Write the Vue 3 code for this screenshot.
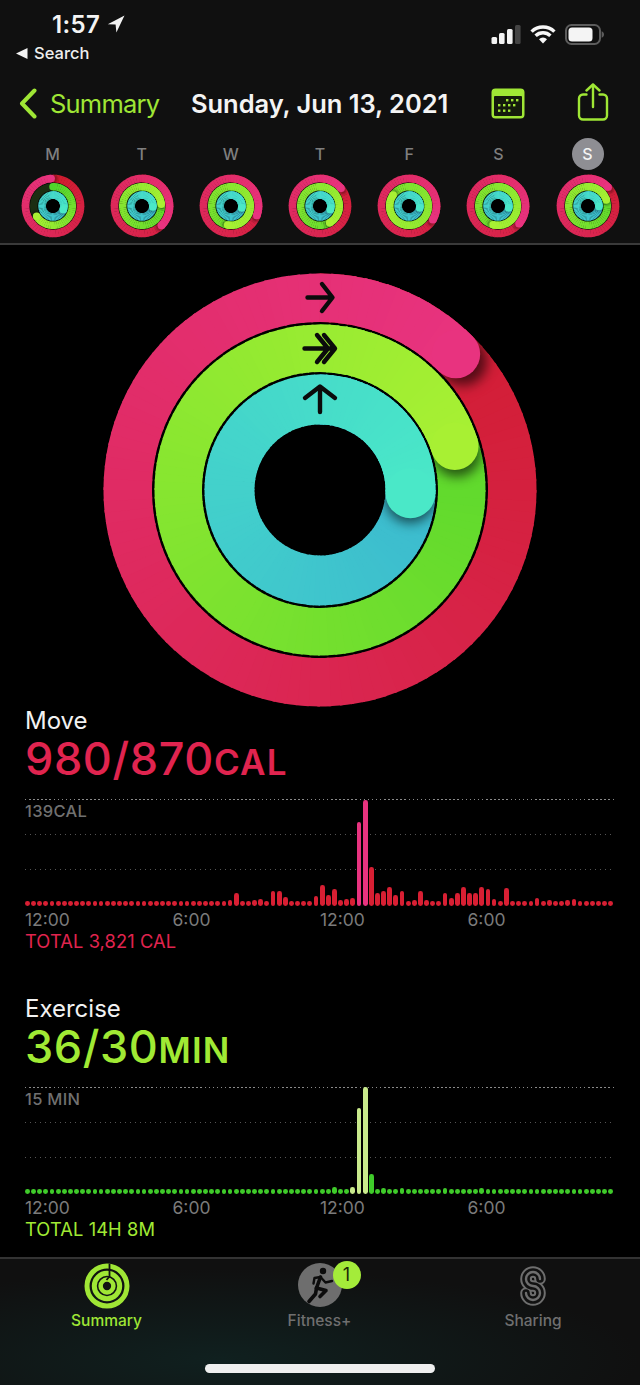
<script setup>
import { h } from 'vue'

const BIG = [
  { mid: 192.25, width: 48.5 },
  { mid: 141.75, width: 47.5 },
  { mid: 90.5, width: 50 },
]
const SMALL = [
  { mid: 27.5, width: 7.7 },
  { mid: 19.3, width: 7.5 },
  { mid: 10.9, width: 7.7 },
]
const PALETTE = [
  { from: [207, 27, 44], to: [232, 51, 127], track: '#2c0a12' },
  { from: [79, 212, 43], to: [168, 240, 51], track: '#1b2e12' },
  { from: [56, 174, 208], to: [74, 232, 200], track: '#0f2a2c' },
]

const polar = (r, deg) => {
  const rad = ((deg - 90) * Math.PI) / 180
  return [r * Math.cos(rad), r * Math.sin(rad)]
}
const arc = (r, a0, a1) => {
  const [x0, y0] = polar(r, a0)
  const [x1, y1] = polar(r, a1)
  return `M${x0.toFixed(2)} ${y0.toFixed(2)}A${r} ${r} 0 0 1 ${x1.toFixed(2)} ${y1.toFixed(2)}`
}
const mix = (a, b, t) =>
  `rgb(${a.map((v, i) => Math.round(v + (b[i] - v) * t)).join(',')})`

const segments = (band, pal, total, a0, a1, step) => {
  const out = []
  for (let a = a0; a < a1; a += step) {
    const e = Math.min(a + step + 0.7, a1)
    out.push(
      h('path', {
        d: arc(band.mid, a, e),
        stroke: mix(pal.from, pal.to, (a + step / 2) / total),
        'stroke-width': band.width,
        fill: 'none',
      }),
    )
  }
  return out
}

const RingSet = (props) => {
  const { bands, totals, id, step, blur } = props
  const large = blur > 2
  const kids = [h('circle', { r: bands[0].mid - bands[0].width / 2 - 0.2, fill: '#000' })]
  bands.forEach((band, i) => {
    const pal = PALETTE[i]
    const total = totals[i]
    const out = band.mid + band.width / 2
    const inn = band.mid - band.width / 2
    const clipId = `${id}-${i}`
    kids.push(
      h('clipPath', { id: clipId }, [
        h('path', {
          'clip-rule': 'evenodd',
          d: `M${-out} 0A${out} ${out} 0 1 1 ${out} 0A${out} ${out} 0 1 1 ${-out} 0ZM${-inn} 0A${inn} ${inn} 0 1 1 ${inn} 0A${inn} ${inn} 0 1 1 ${-inn} 0Z`,
        }),
      ]),
    )
    if (total < 360) {
      kids.push(h('circle', { r: band.mid, fill: 'none', stroke: pal.track, 'stroke-width': band.width }))
    }
    const [sx, sy] = polar(band.mid, 0)
    kids.push(h('circle', { cx: sx, cy: sy, r: band.width / 2, fill: mix(pal.from, pal.to, 0) }))
    const lap = Math.min(total, 360)
    kids.push(...segments(band, pal, total, 0, lap, step))
    const shadowAt = polar(band.mid, total + (large ? 3 : 6))
    kids.push(
      h('g', { 'clip-path': `url(#${clipId})` }, [
        h('circle', {
          cx: shadowAt[0],
          cy: shadowAt[1],
          r: band.width / 2,
          fill: large ? 'rgba(0,0,0,.6)' : 'rgba(0,0,0,.3)',
          style: { filter: `blur(${blur}px)` },
        }),
      ]),
    )
    if (total > 360) kids.push(...segments(band, pal, total, 360, total, step))
    const [hx, hy] = polar(band.mid, total)
    kids.push(h('circle', { cx: hx, cy: hy, r: band.width / 2, fill: mix(pal.from, pal.to, 1) }))
  })
  return h('g', kids)
}
RingSet.props = ['bands', 'totals', 'id', 'step', 'blur']

const days = [
  { letter: 'M', totals: [356, 238, 470] },
  { letter: 'T', totals: [495, 445, 455] },
  { letter: 'W', totals: [470, 550, 460] },
  { letter: 'T', totals: [410, 510, 470] },
  { letter: 'F', totals: [480, 665, 460] },
  { letter: 'S', totals: [490, 555, 460] },
  { letter: 'S', totals: [407, 432, 452], active: true },
]

const makeBars = (over) =>
  Array.from({ length: 96 }, (_, i) => ({ h: over[i]?.[0] ?? 4.8, tone: over[i]?.[1] ?? 'base' }))

const moveRaw = {
  33: 6, 34: 13, 37: 6, 38: 7, 39: 5, 40: 15, 41: 15, 42: 9, 46: 5, 47: 10, 48: 21, 49: 11, 50: 17,
  51: 6, 52: 7, 53: 8, 56: 39, 57: 13, 58: 15, 59: 19, 60: 11, 61: 15, 62: 5, 63: 6, 64: 15, 65: 6,
  68: 13, 69: 8, 70: 13, 71: 19, 72: 13, 73: 13, 74: 19, 75: 17, 76: 7, 77: 5, 78: 18, 83: 8, 85: 6,
  88: 6, 89: 7,
}
const moveOver = { 54: [84, 'hi'], 55: [106.5, 'hi'] }
Object.entries(moveRaw).forEach(([k, v]) => (moveOver[k] = [v, 'base']))

const exerciseOver = {
  50: [7, 'base'], 53: [7, 'hi'], 54: [86, 'hi'], 55: [106.5, 'hi'], 56: [20, 'base'],
  58: [6, 'base'], 61: [6, 'base'], 68: [6, 'base'], 74: [6, 'base'],
}

const charts = [
  {
    key: 'move', title: 'Move', value: '980/870', unit: 'CAL', max: '139CAL',
    total: 'TOTAL 3,821 CAL', bars: makeBars(moveOver),
  },
  {
    key: 'exercise', title: 'Exercise', value: '36/30', unit: 'MIN', max: '15 MIN',
    total: 'TOTAL 14H 8M', bars: makeBars(exerciseOver),
  },
]
const axis = ['12:00', '6:00', '12:00', '6:00']
const sPath = 'M20 13A7 7 0 1 0 13 20A7 7 0 1 1 6 27'
</script>

<template>
  <div class="page">
    <header class="top">
      <div class="status">
        <div class="status-left">
          <div class="clock">
            <span>1:57</span>
            <svg class="loc" width="18" height="18" viewBox="0 0 18 18">
              <path d="M17.5 .5 .8 9.3 8.6 9.6 9.4 17.5Z" fill="#f2f2f2" />
            </svg>
          </div>
          <div class="back-app">
            <svg width="12" height="11" viewBox="0 0 12 11"><path d="M0 5.5 11.5 0V11Z" fill="#f2f2f2" /></svg>
            <span>Search</span>
          </div>
        </div>
        <div class="status-right">
          <svg width="30" height="20" viewBox="0 0 30 20">
            <rect x=".5" y="13" width="5.6" height="7" rx="1.5" fill="#f2f2f2" />
            <rect x="8" y="9" width="5.6" height="11" rx="1.5" fill="#f2f2f2" />
            <rect x="16" y="5" width="5.6" height="15" rx="1.5" fill="#f2f2f2" />
            <rect x="24" y="1" width="5.6" height="19" rx="1.5" fill="#444" />
          </svg>
          <svg width="26" height="20" viewBox="0 0 26 20" fill="none" stroke="#f7f7f7" stroke-width="3.4">
            <path d="M1.6 7.6A16.4 16.4 0 0 1 24.4 7.6" />
            <path d="M5.6 11.7A10.6 10.6 0 0 1 20.4 11.7" />
            <path d="M9 15.2 13 19.4 17 15.2A5.8 5.8 0 0 0 9 15.2Z" fill="#f7f7f7" stroke="none" />
          </svg>
          <svg width="39" height="21" viewBox="0 0 39 21">
            <rect x="1" y="1" width="34" height="19" rx="5.5" fill="none" stroke="#5c5c5c" stroke-width="2" />
            <rect x="3.5" y="3.5" width="24" height="14" rx="3.5" fill="#f4f4f4" />
            <path d="M36.6 7.2C38.2 7.8 39 9 39 10.5S38.2 13.200 36.600 13.800Z" fill="#5c5c5c" />
          </svg>
        </div>
      </div>

      <nav class="nav">
        <div class="nav-back">
          <svg width="19" height="31" viewBox="0 0 19 31" fill="none" stroke="#9fe635" stroke-width="4" stroke-linecap="round" stroke-linejoin="round">
            <path d="M15.500 2.500 3 15.500 15.500 28.500" />
          </svg>
          <span>Summary</span>
        </div>
        <h1 class="nav-title">Sunday, Jun 13, 2021</h1>
        <div class="nav-actions">
          <svg width="34" height="31" viewBox="0 0 34 31">
            <rect x=".5" y=".5" width="33" height="30" rx="4" fill="#9fe635" />
            <rect x="3" y="8" width="28" height="20" rx="1" fill="#141a0c" />
            <g fill="#9fe635">
              <rect v-for="x in [15, 20, 25]" :key="'a' + x" :x="x" y="11" width="2.400" height="2.400" />
              <rect v-for="x in [7, 12, 17, 22]" :key="'b' + x" :x="x" y="16" width="2.400" height="2.400" />
              <rect v-for="x in [7, 12, 17]" :key="'c' + x" :x="x" y="21.500" width="2.400" height="2.400" />
            </g>
          </svg>
          <svg class="share" width="32" height="38" viewBox="0 0 32 38" fill="none" stroke="#9fe635" stroke-width="2.400" stroke-linecap="round" stroke-linejoin="round">
            <path d="M9.500 11.500H6A4 4 0 0 0 2 15.500V32.500A4 4 0 0 0 6 36.500H26A4 4 0 0 0 30 32.500V15.500A4 4 0 0 0 26 11.500H22.500" />
            <path d="M16 24V2" />
            <path d="M9.500 7.500 16 1.500 22.500 7.500" />
          </svg>
        </div>
      </nav>

      <div class="week">
        <div v-for="(d, i) in days" :key="i" class="day">
          <span class="day-letter" :class="{ active: d.active }">{{ d.letter }}</span>
          <svg class="mini" width="64" height="64" viewBox="-32 -32 64 64">
            <RingSet :bands="SMALL" :totals="d.totals" :id="'d' + i" :step="6" :blur="1.2" />
          </svg>
        </div>
      </div>
    </header>

    <section class="hero">
      <svg width="436" height="436" viewBox="-218 -218 436 436">
        <RingSet :bands="BIG" :totals="[405, 432, 452]" id="hero" :step="3" :blur="6" />
        <g fill="none" stroke="#0b0b0b" stroke-width="4.400" stroke-linecap="round" stroke-linejoin="round">
          <path d="M-12.500 -192.500H12M2 -206 12.500 -192.500 2 -179" />
          <path d="M-15.500 -141.500H10M4 -155 15 -141.500 4 -128M-3 -155 8 -141.500 -3 -128" />
          <path d="M0 -78V-102M-15 -92 0 -103.500 15 -92" />
        </g>
      </svg>
    </section>

    <section v-for="c in charts" :key="c.key" class="metric" :class="c.key">
      <div class="metric-title">{{ c.title }}</div>
      <div class="metric-value">{{ c.value }}<small>{{ c.unit }}</small></div>
      <div class="chart">
        <i class="rule strong" />
        <i class="rule r2" />
        <i class="rule r3" />
        <span class="chart-max">{{ c.max }}</span>
        <div class="bars">
          <b v-for="(bar, i) in c.bars" :key="i" :class="bar.tone" :style="{ height: bar.h + 'px' }" />
        </div>
      </div>
      <div class="axis"><span v-for="(a, i) in axis" :key="i">{{ a }}</span></div>
      <div class="total">{{ c.total }}</div>
    </section>

    <footer class="tabs">
      <div class="tab-row">
        <div class="tab on">
          <svg width="46" height="46" viewBox="0 0 46 46" fill="none">
            <circle cx="23" cy="23" r="20" stroke="#9fe635" stroke-width="5" />
            <circle cx="23" cy="23" r="12.700" stroke="#9fe635" stroke-width="5" />
            <circle cx="23" cy="23" r="6.400" stroke="#9fe635" stroke-width="4.500" />
            <path d="M25.500 1V13.500L22.500 17" stroke="#111" stroke-width="1.800" />
          </svg>
          <span>Summary</span>
        </div>
        <div class="tab">
          <div class="fit-icon">
            <svg width="44" height="44" viewBox="0 0 44 44">
              <circle cx="22" cy="22" r="22" fill="#6e6e6e" />
              <circle cx="25" cy="8" r="3.200" fill="#0c0c0c" />
              <g fill="none" stroke="#0c0c0c" stroke-width="3.600" stroke-linecap="round" stroke-linejoin="round">
                <path d="M22.500 14 18.500 25" />
                <path d="M22.500 14 16.500 15 15.500 20.500" stroke-width="2.400" />
                <path d="M22.500 14 27.500 19.500 34 18" stroke-width="2.400" />
                <path d="M18.500 25 17.500 31 11 38.500" />
                <path d="M18.500 25 28 27.500 22 33.500" />
              </g>
            </svg>
            <em class="badge">1</em>
          </div>
          <span>Fitness+</span>
        </div>
        <div class="tab">
          <svg width="26" height="46" viewBox="0 -3 26 46" fill="none" stroke-linecap="round">
            <path :d="sPath" stroke="#6e6e6e" stroke-width="11.600" />
            <path :d="sPath" stroke="#111" stroke-width="7.600" />
            <path :d="sPath" stroke="#6e6e6e" stroke-width="2.400" />
          </svg>
          <span>Sharing</span>
        </div>
      </div>
      <div class="home-bar" />
    </footer>
  </div>
</template>

<style>
html, body { background: #000; }
</style>

<style scoped>
.page {
  width: 640px;
  height: 1385px;
  overflow: hidden;
  background: #000;
  color: #fff;
  font-family: Inter, "Liberation Sans", sans-serif;
  display: flex;
  flex-direction: column;
}
.top {
  height: 245px;
  box-sizing: border-box;
  background: #101010;
  border-bottom: 2px solid #3a3a3a;
  flex: none;
}
.status {
  height: 70px;
  display: flex;
  justify-content: space-between;
}
.status-left { padding: 11px 0 0 16px; }
.clock {
  display: flex;
  align-items: center;
  gap: 7px;
  padding-left: 36px;
  height: 26px;
  font-size: 24px;
  font-weight: 600;
  letter-spacing: 0.4px;
  color: #f4f4f4;
}
.back-app {
  display: flex;
  align-items: center;
  gap: 6px;
  margin-top: 5px;
  font-size: 16.5px;
  font-weight: 500;
  color: #eee;
  height: 22px;
}
.status-right {
  display: flex;
  align-items: flex-start;
  gap: 9px;
  padding: 24px 36px 0 0;
}
.nav {
  height: 68px;
  box-sizing: border-box;
  padding: 0 0 2px 19px;
  display: flex;
  align-items: center;
}
.nav-back {
  display: flex;
  align-items: center;
  gap: 12px;
  width: 172px;
  font-size: 25.5px;
  color: #9fe635;
  letter-spacing: -0.8px;
}
.nav-title {
  margin: 0;
  width: 300px;
  font-size: 25.5px;
  font-weight: 600;
  color: #f4f4f4;
  letter-spacing: -0.05px;
  white-space: nowrap;
}
.nav-actions {
  display: flex;
  align-items: center;
  gap: 52px;
}
.share { margin-top: -3px; }
.week {
  display: grid;
  grid-template-columns: repeat(7, 89.17px);
  padding-left: 8px;
}
.day {
  display: flex;
  flex-direction: column;
  align-items: center;
}
.day-letter {
  width: 32px;
  height: 32px;
  border-radius: 50%;
  display: flex;
  align-items: center;
  justify-content: center;
  font-size: 16px;
  font-weight: 500;
  color: #7f7f7f;
}
.day-letter.active { background: #8e8e93; color: #f4f4f4; }
.mini { margin-top: 4px; }

.hero {
  height: 462px;
  flex: none;
  box-sizing: border-box;
  padding-top: 27px;
  display: flex;
  justify-content: center;
}

.metric {
  flex: none;
  height: 287.5px;
  padding: 0 26px 0 25px;
  box-sizing: border-box;
}
.metric.exercise { height: 262.5px; }
.metric-title {
  height: 28px;
  line-height: 28px;
  font-size: 24px;
  color: #f2f2f2;
}
.metric-value {
  height: 48px;
  line-height: 47px;
  font-size: 45px;
  font-weight: 500;
  white-space: nowrap;
  letter-spacing: 0.6px;
}
.metric-value small {
  font-size: 35px;
  font-weight: 600;
  letter-spacing: 1.2px;
}
.move .metric-value, .move .total { color: #e0244f; }
.exercise .metric-value, .exercise .total { color: #a0ea34; }

.chart {
  position: relative;
  height: 107px;
  margin-top: 16px;
  display: flex;
  align-items: flex-end;
}
.rule {
  position: absolute;
  left: 0;
  right: 0;
  height: 1px;
  background: repeating-linear-gradient(90deg, #555 0 1px, transparent 1px 5px);
}
.rule.strong { top: 0; background: repeating-linear-gradient(90deg, #8a8a8a 0 1.5px, transparent 1.5px 4.08px); }
.rule.r2 { top: 35px; }
.rule.r3 { top: 70px; }
.chart-max {
  position: absolute;
  left: 0;
  top: 2px;
  font-size: 16.5px;
  line-height: 20px;
  font-weight: 500;
  letter-spacing: 0.3px;
  color: #707070;
}
.bars {
  position: relative;
  flex: 1;
  display: flex;
  justify-content: space-between;
  align-items: flex-end;
}
.bars b {
  display: block;
  width: 4.8px;
  border-radius: 2.4px;
  flex: none;
}
.move .bars .base { background: #d81f33; }
.move .bars .hi { background: #e8337f; }
.exercise .bars .base { background: #3fcb2a; }
.exercise .bars .hi { background: #c9ea8c; }

.axis {
  display: grid;
  grid-template-columns: repeat(4, 147.5px);
  height: 24px;
  line-height: 28px;
  font-size: 17.5px;
  color: #7b7b7b;
}
.total {
  height: 22px;
  line-height: 22px;
  font-size: 18.3px;
  letter-spacing: 0.1px;
}

.tabs {
  flex: none;
  height: 128px;
  box-sizing: border-box;
  border-top: 2px solid #333;
  background:
    radial-gradient(ellipse 420px 90px at 220px 100px, #10201f 0%, rgba(16, 32, 31, 0) 100%),
    #101010;
  display: flex;
  flex-direction: column;
  align-items: center;
}
.tab-row {
  width: 100%;
  height: 105px;
  display: grid;
  grid-template-columns: 213px 213px 214px;
  padding-top: 4px;
  box-sizing: border-box;
}
.tab {
  height: 67px;
  display: flex;
  flex-direction: column;
  align-items: center;
  justify-content: space-between;
  font-size: 15.5px;
  font-weight: 500;
  color: #6f6f6f;
}
.tab.on { color: #9fe635; }
.fit-icon { position: relative; width: 44px; height: 44px; }
.badge {
  position: absolute;
  left: 35px;
  top: -2px;
  width: 28px;
  height: 28px;
  border-radius: 50%;
  background: #a4ec3a;
  color: #1a2a08;
  font-style: normal;
  font-size: 18px;
  font-weight: 400;
  line-height: 28px;
  text-align: center;
}
.home-bar {
  width: 230px;
  height: 9px;
  border-radius: 5px;
  background: #efefef;
}
</style>
